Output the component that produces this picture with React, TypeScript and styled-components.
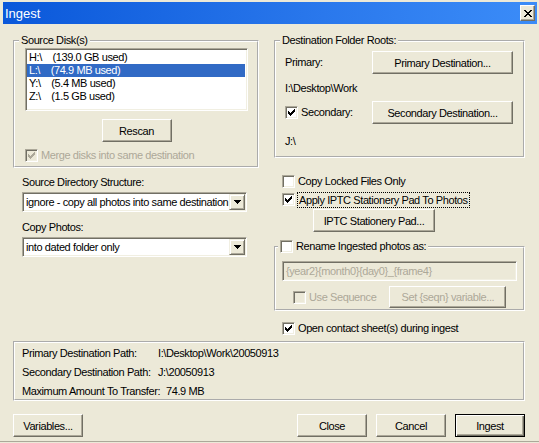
import React from 'react'
import styled, { createGlobalStyle, css } from 'styled-components'

const face = '#ece9d8'
const shadow = '#aca899'
const darkShadow = '#716f64'
const greyText = '#aca899'

const GlobalStyle = createGlobalStyle`
  html, body {
    margin: 0;
    padding: 0;
    background: ${face};
  }
  body {
    font-family: "Liberation Sans", Arial, sans-serif;
    font-size: 11px;
    letter-spacing: -0.4px;
    color: #000;
  }
  * {
    box-sizing: border-box;
  }
`

const sunken = css`
  border: 1px solid;
  border-color: ${shadow} #fff #fff ${shadow};
  box-shadow: inset 1px 1px 0 ${darkShadow}, inset -1px -1px 0 #f1efe2;
`

const raised = css`
  border: 1px solid;
  border-color: #fff ${darkShadow} ${darkShadow} #fff;
  box-shadow: inset -1px -1px 0 ${shadow};
`

const Window = styled.div`
  width: 539px;
  height: 442px;
  background: ${face};
  border-bottom: 1px solid ${shadow};
  display: flex;
  flex-direction: column;
`

const TitleBar = styled.div`
  height: 22px;
  margin: 2px 2px 0 3px;
  padding: 0 2px 0 2px;
  display: flex;
  align-items: center;
  background: linear-gradient(to right, #0a58da, #2a78ec 60%, #3b8cf8);
`

const Title = styled.div`
  flex: 1;
  color: #fff;
  font-size: 13px;
  letter-spacing: 0;
`

const CloseButton = styled.button`
  width: 15px;
  height: 16px;
  padding: 0;
  background: ${face};
  display: flex;
  align-items: center;
  justify-content: center;
  ${raised};
`

const Body = styled.div`
  flex: 1;
  padding: 10px 14px 0 13px;
  display: flex;
  flex-direction: column;
`

const Columns = styled.div`
  display: grid;
  grid-template-columns: 246px 251px;
  column-gap: 15px;
`

const Column = styled.div`
  display: flex;
  flex-direction: column;
  align-items: flex-start;
`

const Group = styled.fieldset<{ $pad: string; $mt?: number }>`
  margin: ${p => p.$mt ?? 0}px 0 0 0;
  padding: ${p => p.$pad};
  border: 2px groove #fff;
  min-width: 0;
  width: 100%;
  display: flex;
  flex-direction: column;
  align-items: flex-start;
`

// the legend sits after the fieldset's left padding, so pull it back
const Legend = styled.legend<{ $ml: number }>`
  margin-left: ${p => p.$ml}px;
  padding: 0 2px;
  line-height: 13px;
`

const ListBox = styled.div`
  width: 223px;
  height: 63px;
  background: #fff;
  padding: 2px 2px 0 1px;
  ${sunken};
`

const ListItem = styled.div<{ $selected?: boolean }>`
  height: 13px;
  line-height: 13px;
  padding-left: 2px;
  white-space: pre;
  ${p =>
    p.$selected &&
    css`
      background: #316ac5;
      color: #fff;
    `}
`

const Centered = styled.div`
  align-self: stretch;
  display: flex;
  justify-content: center;
  margin-top: 8px;
`

const Button = styled.button<{ $w: number; $h?: number; $default?: boolean; $mt?: number; $ml?: number }>`
  width: ${p => p.$w}px;
  height: ${p => p.$h ?? 23}px;
  margin: ${p => p.$mt ?? 0}px 0 0 ${p => p.$ml ?? 0}px;
  padding: 0;
  background: ${face};
  font-family: inherit;
  font-size: 11px;
  letter-spacing: -0.4px;
  color: #000;
  ${raised};
  ${p =>
    p.$default &&
    css`
      border: 1px solid #000;
      box-shadow: inset 1px 1px 0 #fff, inset -1px -1px 0 ${darkShadow}, inset -2px -2px 0 ${shadow};
    `}
  &:disabled {
    color: ${greyText};
  }
`

const CheckRow = styled.label<{ $disabled?: boolean; $mt?: number; $ml?: number }>`
  display: flex;
  align-items: center;
  gap: 3px;
  height: 13px;
  line-height: 13px;
  margin: ${p => p.$mt ?? 0}px 0 0 ${p => p.$ml ?? 0}px;
  white-space: nowrap;
  color: ${p => (p.$disabled ? greyText : '#000')};
`

const Box = styled.span<{ $disabled?: boolean }>`
  flex: none;
  width: 13px;
  height: 13px;
  padding: 1px;
  display: inline-flex;
  background: ${p => (p.$disabled ? face : '#fff')};
  ${sunken};
`

const FocusText = styled.span`
  outline: 1px dotted #000;
  outline-offset: 0;
  padding: 0 1px;
  line-height: 14px;
`

const FieldLabel = styled.div<{ $mt: number }>`
  margin: ${p => p.$mt}px 0 0 9px;
  line-height: 13px;
`

const SelectBox = styled.div`
  width: 225px;
  height: 20px;
  margin: 3px 0 0 9px;
  background: #fff;
  display: flex;
  align-items: center;
  padding: 0 1px 0 2px;
  ${sunken};
`

const SelectText = styled.span`
  flex: 1;
  padding-left: 1px;
  white-space: nowrap;
  overflow: hidden;
`

const ArrowButton = styled.span`
  flex: none;
  width: 16px;
  height: 16px;
  display: flex;
  align-items: center;
  justify-content: center;
  background: ${face};
  border: 1px solid;
  border-color: #f1efe2 ${darkShadow} ${darkShadow} #f1efe2;
  box-shadow: inset 1px 1px 0 #fff, inset -1px -1px 0 ${shadow};
`

const DestRow = styled.div<{ $mt?: number }>`
  display: flex;
  align-items: center;
  margin-top: ${p => p.$mt ?? 0}px;
`

const DestLabel = styled.div`
  width: 87px;
  line-height: 13px;
`

const PathText = styled.div<{ $mt: number }>`
  margin-top: ${p => p.$mt}px;
  line-height: 13px;
`

const TextField = styled.div`
  width: 235px;
  height: 20px;
  margin-top: 4px;
  padding: 0 3px;
  display: flex;
  align-items: center;
  color: ${greyText};
  background: ${face};
  ${sunken};
`

const SeqRow = styled.div`
  display: flex;
  align-items: center;
  margin-top: 5px;
`

const InfoBox = styled.div`
  margin-top: 6px;
  height: 60px;
  border: 2px groove #fff;
  padding: 0 0 0 7px;
  display: grid;
  grid-template-columns: 136px auto;
  grid-auto-rows: 19px;
  align-items: center;
  align-content: start;
  white-space: nowrap;
`

const Value = styled.div<{ $indent?: number }>`
  padding-left: ${p => p.$indent ?? 0}px;
`

const Footer = styled.div`
  margin-top: 13px;
  display: flex;
  justify-content: space-between;
`

const FooterRight = styled.div`
  display: flex;
  gap: 9px;
`

function Check({ checked, disabled }: { checked?: boolean; disabled?: boolean }) {
  const fill = disabled ? greyText : '#000'
  return (
    <Box $disabled={disabled}>
      {checked && (
        <svg width="9" height="9" viewBox="0 0 9 9" shapeRendering="crispEdges">
          {[2, 3, 4, 3, 2, 1, 0].map((top, i) => (
            <rect key={i} x={i + 1} y={top + 1} width="1" height="3" fill={fill} />
          ))}
        </svg>
      )}
    </Box>
  )
}

function Select({ value }: { value: string }) {
  return (
    <SelectBox>
      <SelectText>{value}</SelectText>
      <ArrowButton>
        <svg width="7" height="4" viewBox="0 0 7 4" shapeRendering="crispEdges">
          <path d="M0 0h7v1h-1v1h-1v1h-1v1h-1v-1h-1v-1h-1v-1h-1z" fill="#000" />
        </svg>
      </ArrowButton>
    </SelectBox>
  )
}

const disks = [
  { drive: 'H:\\', used: '139.0 GB' },
  { drive: 'L:\\', used: '74.9 MB', selected: true },
  { drive: 'Y:\\', used: '5.4 MB' },
  { drive: 'Z:\\', used: '1.5 GB' },
]

export default function App() {
  return (
    <>
      <GlobalStyle />
      <Window>
        <TitleBar>
          <Title>Ingest</Title>
          <CloseButton aria-label="Close">
            <svg width="8" height="7" viewBox="0 0 8 7" shapeRendering="crispEdges">
              <path
                d="M0 0h2v1h1v1h2v-1h1v-1h2v1h-1v1h-1v1h-1v1h1v1h1v1h1v1h-2v-1h-1v-1h-2v1h-1v1h-2v-1h1v-1h1v-1h1v-1h-1v-1h-1v-1h-1z"
                fill="#000"
              />
            </svg>
          </CloseButton>
        </TitleBar>
        <Body>
          <Columns>
            <Column>
              <Group $pad="1px 9px 4px 10px">
                <Legend $ml={-6}>Source Disk(s)</Legend>
                <ListBox>
                  {disks.map(d => (
                    <ListItem key={d.drive} $selected={d.selected}>
                      {d.drive}    ({d.used} used)
                    </ListItem>
                  ))}
                </ListBox>
                <Centered>
                  <Button $w={70}>Rescan</Button>
                </Centered>
                <CheckRow $disabled $mt={7}>
                  <Check checked disabled />
                  Merge disks into same destination
                </CheckRow>
              </Group>
              <FieldLabel $mt={8}>Source Directory Structure:</FieldLabel>
              <Select value="ignore - copy all photos into same destination" />
              <FieldLabel $mt={9}>Copy Photos:</FieldLabel>
              <Select value="into dated folder only" />
            </Column>

            <Column>
              <Group $pad="4px 9px 8px 9px">
                <Legend $ml={-5}>Destination Folder Roots:</Legend>
                <DestRow>
                  <DestLabel>Primary:</DestLabel>
                  <Button $w={141}>Primary Destination...</Button>
                </DestRow>
                <PathText $mt={8}>I:\Desktop\Work</PathText>
                <DestRow $mt={6}>
                  <DestLabel>
                    <CheckRow>
                      <Check checked />
                      Secondary:
                    </CheckRow>
                  </DestLabel>
                  <Button $w={141}>Secondary Destination...</Button>
                </DestRow>
                <PathText $mt={11}>J:\</PathText>
              </Group>

              <CheckRow $mt={17} $ml={8}>
                <Check />
                Copy Locked Files Only
              </CheckRow>
              <CheckRow $mt={5} $ml={8}>
                <Check checked />
                <FocusText>Apply IPTC Stationery Pad To Photos</FocusText>
              </CheckRow>
              <Button $w={122} $mt={3} $ml={39}>
                IPTC Stationery Pad...
              </Button>

              <Group $pad="4px 7px 1px 6px" $mt={8}>
                <Legend $ml={-4}>
                  <CheckRow>
                    <Check />
                    Rename Ingested photos as:
                  </CheckRow>
                </Legend>
                <TextField>{'{year2}{month0}{day0}_{frame4}'}</TextField>
                <SeqRow>
                  <CheckRow $disabled $ml={11}>
                    <Check disabled />
                    Use Sequence
                  </CheckRow>
                  <Button $w={117} $h={22} $ml={13} disabled>
                    Set {'{seqn}'} variable...
                  </Button>
                </SeqRow>
              </Group>

              <CheckRow $mt={11} $ml={8}>
                <Check checked />
                Open contact sheet(s) during ingest
              </CheckRow>
            </Column>
          </Columns>

          <InfoBox>
            <div>Primary Destination Path:</div>
            <Value>I:\Desktop\Work\20050913</Value>
            <div>Secondary Destination Path:</div>
            <Value>J:\20050913</Value>
            <div>Maximum Amount To Transfer:</div>
            <Value $indent={8}>74.9 MB</Value>
          </InfoBox>

          <Footer>
            <Button $w={70}>Variables...</Button>
            <FooterRight>
              <Button $w={70}>Close</Button>
              <Button $w={70}>Cancel</Button>
              <Button $w={70} $default>
                Ingest
              </Button>
            </FooterRight>
          </Footer>
        </Body>
      </Window>
    </>
  )
}
